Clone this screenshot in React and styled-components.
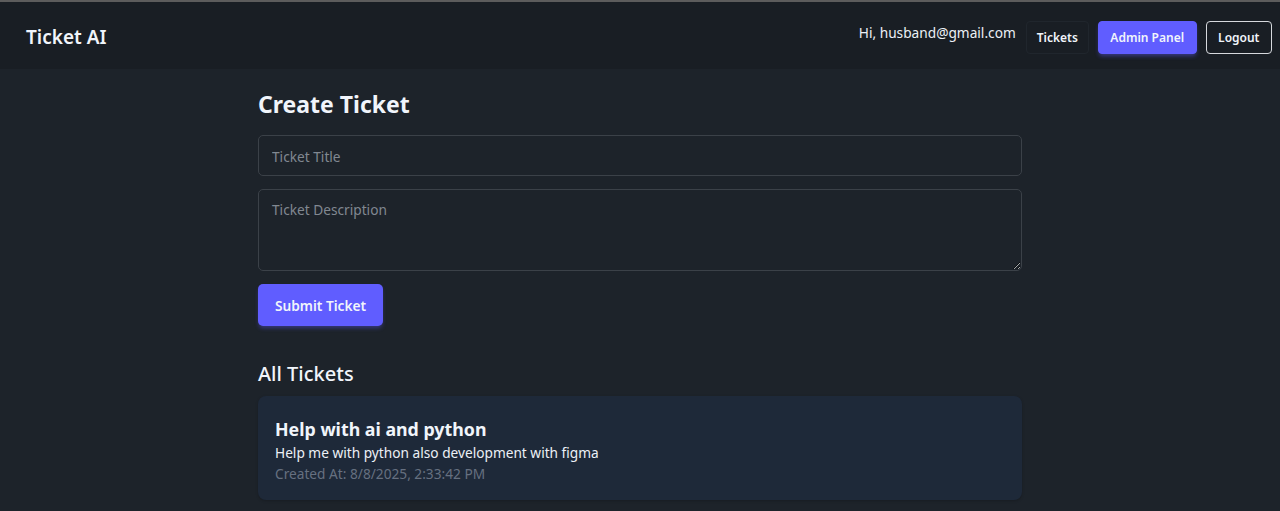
import React from "react";
import styled, { createGlobalStyle } from "styled-components";

const Global = createGlobalStyle`
  html, body { margin: 0; padding: 0; background: #1d232a; }
  body { font-family: "Noto Sans", "Open Sans", sans-serif; color: #ecf0f6; }
  * { box-sizing: border-box; }
`;

const Page = styled.div`
  min-height: 511px;
  border-top: 2px solid #5c5c5c;
`;

const Navbar = styled.header`
  display: flex;
  align-items: center;
  justify-content: space-between;
  height: 67px;
  padding: 3px 8px 0 26px;
  background: #191e24;
`;

const Brand = styled.div`
  font-size: 19px;
  font-weight: 600;
  color: #f1f5fb;
`;

const NavRight = styled.nav`
  display: flex;
  align-items: center;
  gap: 9px;
`;

const Greeting = styled.span`
  font-size: 13.7px;
  color: #ecf0f6;
  margin-right: 1px;
  margin-bottom: 9px;
`;

const NavButton = styled.button`
  font-family: inherit;
  font-size: 12px;
  font-weight: 600;
  height: 33px;
  padding: 0 ${p => (p.$variant ? "11.5px" : "10px")};
  border-radius: 4px;
  cursor: pointer;
  color: #f1f5fb;
  background: ${p => (p.$variant === "primary" ? "#605dff" : "transparent")};
  border: 1px solid
    ${p =>
      p.$variant === "primary"
        ? "#605dff"
        : p.$variant === "outline"
        ? "#d6d9dd"
        : "#20262d"};
  box-shadow: ${p => (p.$variant === "primary" ? "0 3px 4px -1px rgba(96,93,255,0.45)" : "none")};
`;

const Main = styled.main`
  width: 764px;
  margin: 0 auto;
  padding-top: 19px;
  display: flex;
  flex-direction: column;
`;

const Title = styled.h1`
  margin: 0 0 15px;
  font-size: 23px;
  font-weight: 700;
  line-height: 32px;
  color: #f1f5fb;
`;

const Form = styled.form`
  display: flex;
  flex-direction: column;
  align-items: flex-start;
  gap: 13px;
`;

const fieldStyles = `
  width: 100%;
  font-family: inherit;
  font-size: 13.7px;
  color: #ecf0f6;
  background: #1d232a;
  border: 1px solid #3b4148;
  border-radius: 5px;
  padding: 0 13px;
  outline: none;
  &::placeholder { color: #818891; }
`;

const Input = styled.input`
  ${fieldStyles}
  height: 41px;
  padding-top: 2px;
`;

const TextArea = styled.textarea`
  ${fieldStyles}
  height: 82px;
  padding-top: 10px;
  resize: vertical;
  line-height: 20px;
`;

const SubmitButton = styled.button`
  font-family: inherit;
  font-size: 13.7px;
  font-weight: 600;
  color: #f1f5fb;
  background: #605dff;
  border: none;
  border-radius: 5px;
  height: 42px;
  padding: 0 17px;
  box-shadow: 0 3px 4px -1px rgba(96, 93, 255, 0.4);
  cursor: pointer;
`;

const SectionTitle = styled.h2`
  margin: 34px 0 8px;
  font-size: 20px;
  font-weight: 500;
  line-height: 28px;
  color: #f1f5fb;
`;

const Card = styled.article`
  background: #1e2939;
  border-radius: 8px;
  padding: 20px 17px 16px;
  box-shadow: 0 1px 3px rgba(0, 0, 0, 0.2);
`;

const CardTitle = styled.h3`
  margin: 0;
  font-size: 17.8px;
  font-weight: 700;
  line-height: 26px;
  color: #f1f5fb;
`;

const CardText = styled.p`
  margin: 0;
  font-size: 13.7px;
  line-height: 21px;
  color: ${p => (p.$muted ? "#667080" : "#ecf0f6")};
`;

export default function App() {
  return (
    <>
      <Global />
      <Page>
        <Navbar>
          <Brand>Ticket AI</Brand>
          <NavRight>
            <Greeting>Hi, husband@gmail.com</Greeting>
            <NavButton>Tickets</NavButton>
            <NavButton $variant="primary">Admin Panel</NavButton>
            <NavButton $variant="outline">Logout</NavButton>
          </NavRight>
        </Navbar>
        <Main>
          <Title>Create Ticket</Title>
          <Form onSubmit={e => e.preventDefault()}>
            <Input placeholder="Ticket Title" />
            <TextArea placeholder="Ticket Description" />
            <SubmitButton type="submit">Submit Ticket</SubmitButton>
          </Form>
          <SectionTitle>All Tickets</SectionTitle>
          <Card>
            <CardTitle>Help with ai and python</CardTitle>
            <CardText>Help me with python also development with figma</CardText>
            <CardText $muted>Created At: 8/8/2025, 2:33:42 PM</CardText>
          </Card>
        </Main>
      </Page>
    </>
  );
}
